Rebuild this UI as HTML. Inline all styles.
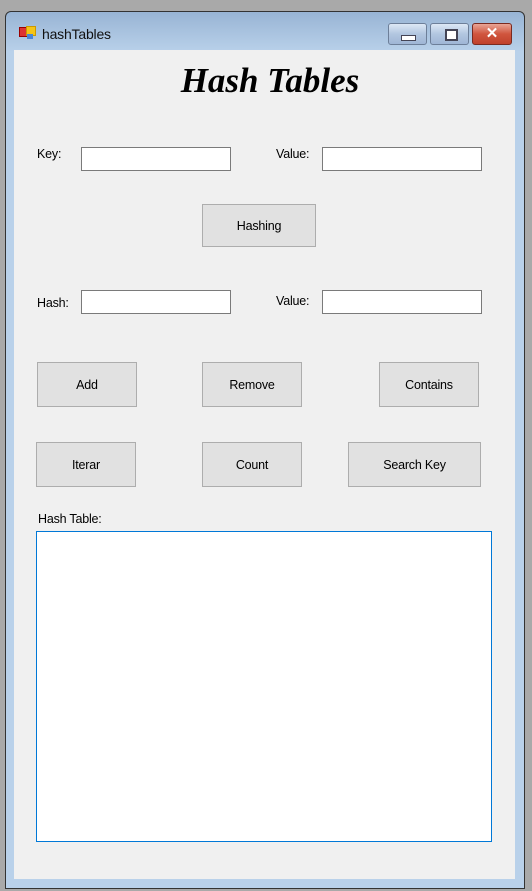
<!DOCTYPE html>
<html><head><style>
body{margin:0;width:532px;height:891px;background:#a9a9a9;position:relative;overflow:hidden;font-family:"Liberation Sans",sans-serif;}
.win{position:absolute;left:5px;top:11px;width:518px;height:876px;border:1px solid #333;border-radius:6px 6px 0 0;background:linear-gradient(#98b4d4 0,#b9d1ea 40px,#b9d1ea 100%);}
.client{position:absolute;left:14px;top:50px;width:501px;height:829px;background:#f0f0f0;}
.t{position:absolute;font-size:12.5px;color:#000;letter-spacing:-0.2px;}
.tb{position:absolute;height:22px;background:#fff;border:1px solid #7a7a7a;box-sizing:border-box;}
.btn{position:absolute;background:#e1e1e1;border:1px solid #adadad;box-sizing:border-box;font-size:12.5px;letter-spacing:-0.2px;display:flex;align-items:center;justify-content:center;}
.cb{position:absolute;top:23px;height:22px;border:1px solid #6d7f99;border-radius:3px;box-sizing:border-box;background:linear-gradient(#dde8f5,#b2c6e0 50%,#9fb6d6);}
</style></head><body>
<div class="win"></div>
<div style="position:absolute;left:19px;top:27px;width:7px;height:8px;background:#d33;border:1px solid #900"></div>
<div style="position:absolute;left:26px;top:26px;width:8px;height:8px;background:#f5c518;border:1px solid #c90"></div>
<div style="position:absolute;left:27px;top:34px;width:6px;height:5px;background:#4a86d8"></div>
<div class="t" style="left:42px;top:26px;font-size:14px;color:#111">hashTables</div>
<div class="cb" style="left:388px;width:39px"><div style="position:absolute;left:12px;top:11px;width:13px;height:4px;background:#fff;border:1px solid #445"></div></div>
<div class="cb" style="left:430px;width:39px"><div style="position:absolute;left:14px;top:5px;width:9px;height:8px;border:2px solid #445;background:#fff"></div></div>
<div class="cb" style="left:472px;width:40px;background:linear-gradient(#e9a596,#d0553e 50%,#c0402b);border-color:#7a2a20;color:#fff;font-weight:bold;font-size:15px;text-align:center;line-height:19px">✕</div>
<div class="client"></div>
<div class="t" style="left:0;width:540px;text-align:center;top:61px;font-family:'Liberation Serif',serif;font-style:italic;font-weight:bold;font-size:35px;letter-spacing:0">Hash Tables</div>
<div class="t" style="left:37px;top:147px">Key:</div>
<div class="tb" style="left:81px;top:147px;width:150px;height:24px"></div>
<div class="t" style="left:276px;top:147px">Value:</div>
<div class="tb" style="left:322px;top:147px;width:160px;height:24px"></div>
<div class="btn" style="left:202px;top:204px;width:114px;height:43px">Hashing</div>
<div class="t" style="left:37px;top:296px">Hash:</div>
<div class="tb" style="left:81px;top:290px;width:150px;height:24px"></div>
<div class="t" style="left:276px;top:294px">Value:</div>
<div class="tb" style="left:322px;top:290px;width:160px;height:24px"></div>
<div class="btn" style="left:37px;top:362px;width:100px;height:45px">Add</div>
<div class="btn" style="left:202px;top:362px;width:100px;height:45px">Remove</div>
<div class="btn" style="left:379px;top:362px;width:100px;height:45px">Contains</div>
<div class="btn" style="left:36px;top:442px;width:100px;height:45px">Iterar</div>
<div class="btn" style="left:202px;top:442px;width:100px;height:45px">Count</div>
<div class="btn" style="left:348px;top:442px;width:133px;height:45px">Search Key</div>
<div class="t" style="left:38px;top:512px">Hash Table:</div>
<div style="position:absolute;left:36px;top:531px;width:456px;height:311px;background:#fff;border:1px solid #0078d7;box-sizing:border-box"></div>
</body></html>
